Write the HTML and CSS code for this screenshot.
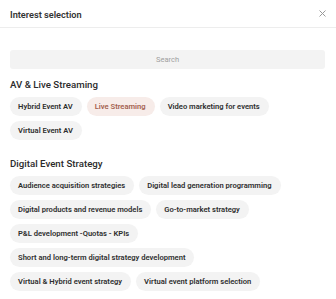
FILE: index.html
```html
<!DOCTYPE html>
<html lang="en">
<head>
    <meta charset="UTF-8">
    <meta name="viewport" content="width=device-width, initial-scale=1.0">
    <title>Interest selection</title>
    <link rel="stylesheet" href="styles.css">
</head>
<body>

    <div class="modal-header">
        <h1>Interest selection</h1>
        <span class="close">
            <svg width="7" height="7" viewBox="0 0 7 7"><path d="M0.5 0.5L6.5 6.5M6.5 0.5L0.5 6.5" stroke="#9a9a9a" stroke-width="1" fill="none"/></svg>
        </span>
    </div>

    <div class="modal-body">
        <input class="search" type="text" placeholder="Search">

        <!-- AV & Live Streaming -->
        <h2>AV &amp; Live Streaming</h2>
        <div class="chips">
            <span class="chip">Hybrid Event AV</span>
            <span class="chip selected">Live Streaming</span>
            <span class="chip">Video marketing for events</span>
            <span class="chip">Virtual Event AV</span>
        </div>

        <!-- Digital Event Strategy -->
        <h2 class="next">Digital Event Strategy</h2>
        <div class="chips">
            <span class="chip">Audience acquisition strategies</span>
            <span class="chip">Digital lead generation programming</span>
            <span class="chip">Digital products and revenue models</span>
            <span class="chip">Go-to-market strategy</span>
            <span class="chip">P&amp;L development -Quotas - KPIs</span>
            <span class="chip">Short and long-term digital strategy development</span>
            <span class="chip">Virtual &amp; Hybrid event strategy</span>
            <span class="chip">Virtual event platform selection</span>
        </div>
    </div>

</body>
</html>
```

FILE: styles.css
```css
body {
    font-family: Roboto, Arial, sans-serif;
    background-color: #fff;
    color: #2b2b2b;
    margin: 0;
    padding: 0;
}

.modal-header {
    display: flex;
    align-items: center;
    justify-content: space-between;
    height: 26px;
    padding: 1px 10px 0 10px;
    border-bottom: 1px solid #ededed;
    box-sizing: content-box;
}

.modal-header h1 {
    margin: 0;
    font-size: 9.2px;
    font-weight: 600;
    color: #333;
}

.close {
    display: flex;
    width: 7px;
    height: 7px;
    margin-top: -1px;
}

.modal-body {
    padding: 22px 11px 0 10px;
}

.search {
    display: block;
    box-sizing: border-box;
    width: 100%;
    height: 19px;
    border: none;
    border-radius: 3px;
    background-color: #f3f3f3;
    text-align: center;
    font-family: inherit;
    font-size: 7.5px;
    outline: none;
}

.search::placeholder {
    color: #a0a0a0;
}

h2 {
    margin: 8px 0 4px;
    font-size: 9.7px;
    font-weight: 500;
    color: #2b2b2b;
    line-height: 16px;
}

h2.next {
    margin-top: 16px;
}

.chips {
    display: flex;
    flex-wrap: wrap;
    gap: 5px;
    padding-right: 20px;
}

.chip {
    display: flex;
    align-items: center;
    height: 19px;
    padding: 0 9px 0 8px;
    border-radius: 10px;
    background-color: #f3f3f3;
    font-size: 7.6px;
    font-weight: 600;
    color: #2e2e2e;
    white-space: nowrap;
}

.chip.selected {
    background-color: #f7ece9;
    color: #a4614f;
}
```
